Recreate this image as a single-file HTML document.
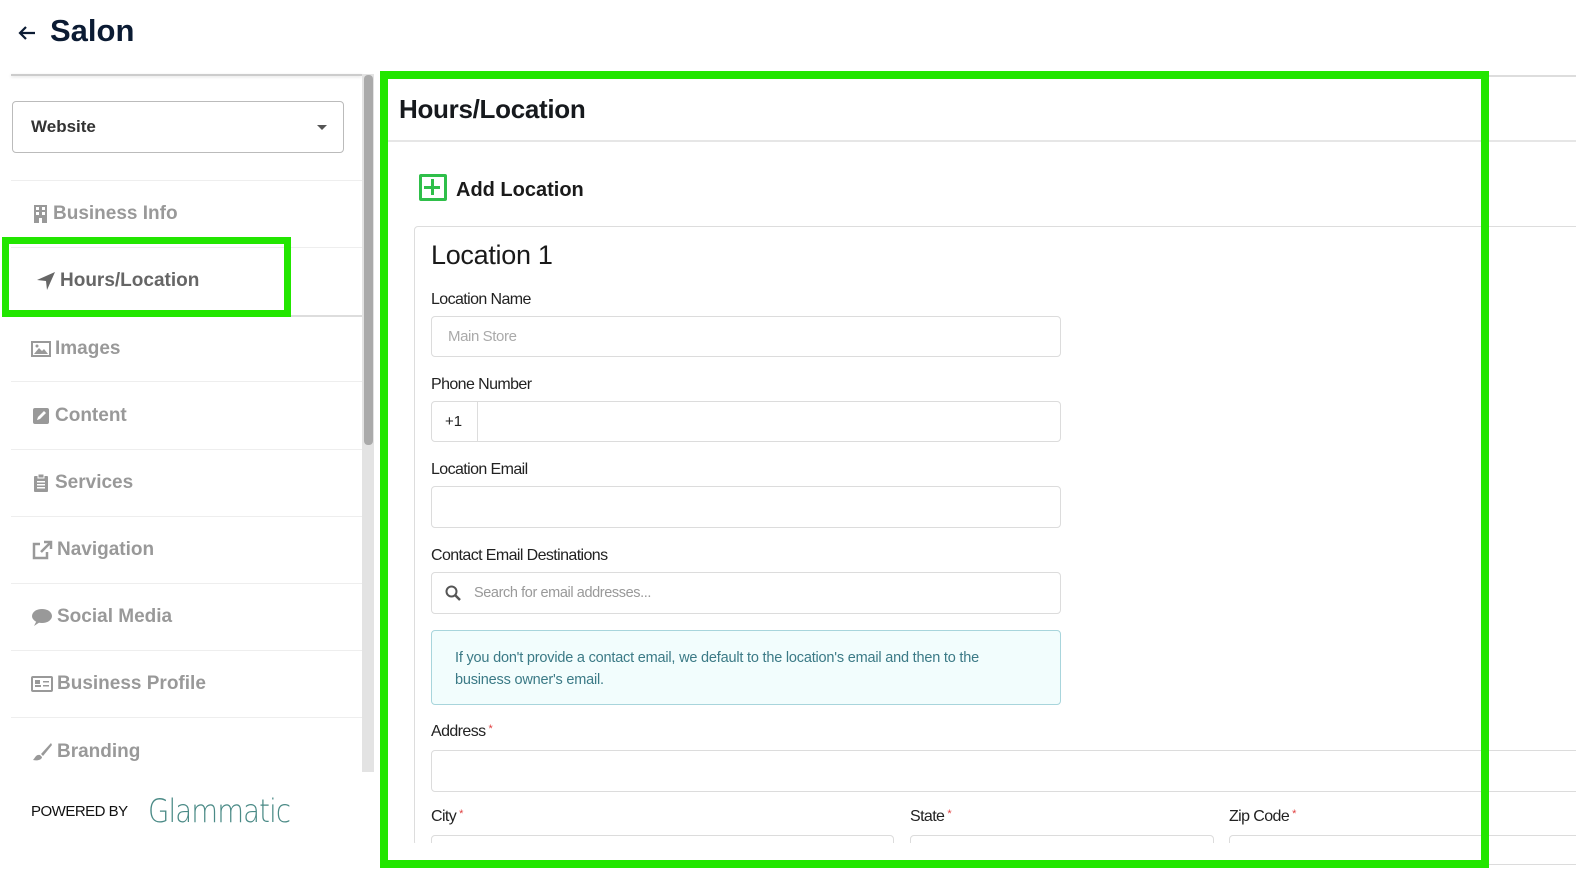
<!DOCTYPE html>
<html><head><meta charset="utf-8"><style>
*{box-sizing:border-box;margin:0;padding:0}
body{width:1576px;height:872px;overflow:hidden;background:#fff;font-family:"Liberation Sans",sans-serif;position:relative;color:#222}
.abs{position:absolute}
.nav{position:absolute;left:31px;font-size:19px;font-weight:bold;color:#999;display:flex;align-items:center;gap:4px}
.div{position:absolute;left:11px;width:351px;height:1px;background:#eee}
.lbl{position:absolute;left:431px;font-size:16px;color:#222;letter-spacing:-0.6px}
.inp{position:absolute;border:1px solid #dcdcdc;border-radius:4px;background:#fff}
.req{color:#e04040;font-size:11px;vertical-align:top;margin-left:3px}
</style></head><body>
<svg class="abs" style="left:17px;top:25px" width="20" height="16" viewBox="0 0 20 16"><path d="M18 8 H3 M9 2 L3 8 L9 14" fill="none" stroke="#0b1b33" stroke-width="2.2"/></svg>
<div class="abs" style="left:50px;top:13px;font-size:31px;font-weight:bold;color:#0b1b33">Salon</div>

<div class="abs" style="left:11px;top:74px;width:351px;height:2px;background:#ccc;box-shadow:0 1px 3px #ddd"></div>
<div class="abs" style="left:362px;top:74px;width:12px;height:698px;background:#e3e3e3"></div>
<div class="abs" style="left:364px;top:75px;width:9px;height:370px;background:#aaa;border-radius:4px"></div>

<div class="abs" style="left:12px;top:101px;width:332px;height:52px;border:1px solid #bbb;border-radius:4px"></div>
<div class="abs" style="left:31px;top:117px;font-size:17px;font-weight:bold;color:#333">Website</div>
<div class="abs" style="left:317px;top:125px;width:0;height:0;border-left:5px solid transparent;border-right:5px solid transparent;border-top:5px solid #555"></div>

<div class="div" style="top:180px"></div>
<div class="div" style="top:247px"></div>
<div class="abs" style="left:11px;top:315px;width:351px;height:2px;background:#ddd"></div>
<div class="div" style="top:381px"></div>
<div class="div" style="top:449px"></div>
<div class="div" style="top:516px"></div>
<div class="div" style="top:583px"></div>
<div class="div" style="top:650px"></div>
<div class="div" style="top:717px"></div>

<div class="nav" style="top:203px"><svg width="18" height="20" viewBox="0 0 18 20"><rect x="3" y="1" width="13" height="18" fill="#999"/><g fill="#fff"><rect x="5" y="3" width="3" height="3"/><rect x="11" y="3" width="3" height="3"/><rect x="5" y="8" width="3" height="3"/><rect x="11" y="8" width="3" height="3"/><rect x="8" y="14" width="3" height="5"/></g></svg>Business Info</div>
<div class="nav" style="top:270px;left:36px;color:#666"><svg width="20" height="20" viewBox="0 0 20 20"><path d="M19 1 L1 9 L10 10 L11 19 Z" fill="#666"/></svg>Hours/Location</div>
<div class="nav" style="top:338px"><svg width="20" height="16" viewBox="0 0 20 16"><rect x="1" y="1" width="18" height="14" fill="none" stroke="#999" stroke-width="2"/><path d="M3 13 L8 7 L11 10 L13 8 L17 13Z" fill="#999"/><circle cx="6" cy="5" r="1.5" fill="#999"/></svg>Images</div>
<div class="nav" style="top:405px"><svg width="20" height="18" viewBox="0 0 20 18"><rect x="2" y="1" width="16" height="16" rx="2" fill="#999"/><path d="M6 13 L7 10 L13 4 L15 6 L9 12Z" fill="#fff"/></svg>Content</div>
<div class="nav" style="top:472px"><svg width="20" height="20" viewBox="0 0 20 20"><rect x="3" y="3" width="14" height="16" rx="1" fill="#999"/><rect x="7" y="1" width="6" height="4" fill="#999" stroke="#fff"/><g fill="#fff"><rect x="6" y="8" width="8" height="1.5"/><rect x="6" y="11" width="8" height="1.5"/><rect x="6" y="14" width="8" height="1.5"/></g></svg>Services</div>
<div class="nav" style="top:539px"><svg width="22" height="20" viewBox="0 0 22 20"><path d="M9 4 H3 V18 H16 V12" fill="none" stroke="#999" stroke-width="2.5"/><path d="M13 2 H20 V9 M20 2 L10 12" fill="none" stroke="#999" stroke-width="2.5"/></svg>Navigation</div>
<div class="nav" style="top:606px"><svg width="22" height="20" viewBox="0 0 22 20"><ellipse cx="11" cy="9" rx="10" ry="7" fill="#999"/><path d="M3 19 L6 13 L9 15Z" fill="#999"/></svg>Social Media</div>
<div class="nav" style="top:673px"><svg width="22" height="18" viewBox="0 0 22 18"><rect x="1" y="2" width="20" height="14" rx="1" fill="none" stroke="#999" stroke-width="2"/><rect x="4" y="5" width="5" height="4" fill="#999"/><rect x="4" y="10" width="6" height="2" fill="#999"/><rect x="12" y="6" width="6" height="1.5" fill="#999"/><rect x="12" y="10" width="6" height="1.5" fill="#999"/></svg>Business Profile</div>
<div class="nav" style="top:741px"><svg width="22" height="20" viewBox="0 0 22 20"><path d="M20 1 L10 12 L12 14 L21 3Z" fill="#999"/><path d="M9 13 C5 12 4 16 2 18 C6 19 11 18 11 15Z" fill="#999"/></svg>Branding</div>

<div class="abs" style="left:31px;top:803px;font-size:15px;color:#111;letter-spacing:-0.5px">POWERED BY</div>
<div class="abs" style="left:148px;top:792px;font-size:32px;color:#4a8a86;font-family:'DejaVu Sans',sans-serif;font-weight:200;letter-spacing:-1px;transform:scaleX(0.86);transform-origin:left">Glammatic</div>

<!-- main -->
<div class="abs" style="left:388px;top:75px;width:1188px;height:2px;background:#ddd"></div>
<div class="abs" style="left:388px;top:140px;width:1188px;height:2px;background:#e6e6e6"></div>
<div class="abs" style="left:399px;top:94px;font-size:26px;font-weight:bold;color:#16191d;letter-spacing:-0.3px">Hours/Location</div>

<div class="abs" style="left:419px;top:174px;width:28px;height:27px;border:3px solid #2fbf4a;border-radius:2px"></div>
<div class="abs" style="left:424px;top:186px;width:16px;height:3px;background:#2fbf4a"></div>
<div class="abs" style="left:430.5px;top:179px;width:3px;height:16px;background:#2fbf4a"></div>
<div class="abs" style="left:456px;top:179px;font-size:20px;font-weight:bold;color:#1a1a1a">Add Location</div>

<div class="abs" style="left:414px;top:226px;width:1200px;height:620px;border:1px solid #ddd;border-radius:4px"></div>
<div class="abs" style="left:431px;top:240px;font-size:27px;color:#1a1a1a;letter-spacing:-0.3px">Location 1</div>

<div class="lbl" style="top:291px">Location Name</div>
<div class="inp" style="left:431px;top:316px;width:630px;height:41px"></div>
<div class="abs" style="left:448px;top:328px;font-size:15px;color:#aaa;letter-spacing:-0.4px">Main Store</div>

<div class="lbl" style="top:376px">Phone Number</div>
<div class="inp" style="left:431px;top:401px;width:630px;height:41px"></div>
<div class="abs" style="left:477px;top:402px;width:1px;height:39px;background:#ddd"></div>
<div class="abs" style="left:445px;top:413px;font-size:15px;color:#222">+1</div>

<div class="lbl" style="top:461px">Location Email</div>
<div class="inp" style="left:431px;top:486px;width:630px;height:42px"></div>

<div class="lbl" style="top:547px">Contact Email Destinations</div>
<div class="inp" style="left:431px;top:572px;width:630px;height:42px"></div>
<svg class="abs" style="left:445px;top:585px" width="16" height="16" viewBox="0 0 16 16"><circle cx="6.5" cy="6.5" r="5" fill="none" stroke="#555" stroke-width="2"/><path d="M10 10 L15 15" stroke="#555" stroke-width="2.5"/></svg>
<div class="abs" style="left:474px;top:585px;font-size:14.5px;color:#999;letter-spacing:-0.4px">Search for email addresses...</div>

<div class="abs" style="left:431px;top:630px;width:630px;height:75px;border:1px solid #a8d5dc;border-radius:4px;background:#f2fdfd"></div>
<div class="abs" style="left:455px;top:647px;width:600px;font-size:14.5px;line-height:22px;color:#3b7a86;letter-spacing:-0.2px">If you don't provide a contact email, we default to the location's email and then to the<br>business owner's email.</div>

<div class="lbl" style="top:723px">Address<span class="req">*</span></div>
<div class="inp" style="left:431px;top:750px;width:1200px;height:42px"></div>
<div class="lbl" style="top:808px">City<span class="req">*</span></div>
<div class="lbl" style="top:808px;left:910px">State<span class="req">*</span></div>
<div class="lbl" style="top:808px;left:1229px">Zip Code<span class="req">*</span></div>
<div class="inp" style="left:431px;top:835px;width:463px;height:30px"></div>
<div class="inp" style="left:910px;top:835px;width:304px;height:30px"></div>
<div class="inp" style="left:1229px;top:835px;width:400px;height:30px"></div>
<div class="abs" style="left:388px;top:843px;width:1100px;height:29px;background:#fff"></div>

<!-- highlight boxes -->
<div class="abs" style="left:380px;top:71px;width:1109px;height:797px;border:8px solid #22e600"></div>
<div class="abs" style="left:2px;top:237px;width:289px;height:80px;border:7px solid #22e600"></div>
</body></html>
